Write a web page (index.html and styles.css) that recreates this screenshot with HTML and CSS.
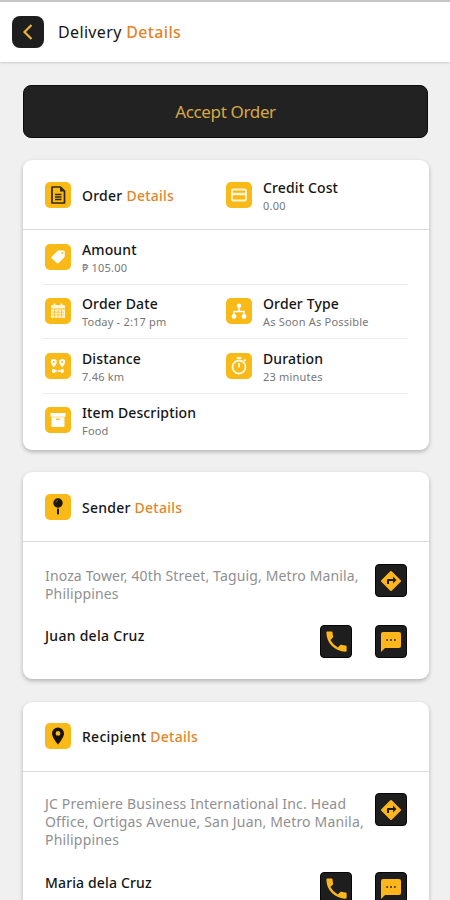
FILE: index.html
```html
<!DOCTYPE html>
<html lang="en">
<head>
<meta charset="utf-8">
<title>Delivery Details</title>
<link rel="stylesheet" href="styles.css">
</head>
<body>
<svg width="0" height="0" class="defs">
  <symbol id="turn" viewBox="0 0 24 24"><path d="M21.71 11.29l-9-9a1 1 0 0 0-1.42 0l-9 9a1 1 0 0 0 0 1.42l9 9a1 1 0 0 0 1.42 0l9-9a1 1 0 0 0 0-1.42zM14 14.5V12h-4v3H8v-4a1 1 0 0 1 1-1h5V7.5l3.5 3.5z"/></symbol>
  <symbol id="phone" viewBox="0 0 24 24"><path d="M20 15.5c-1.2 0-2.5-.2-3.6-.6-.3-.1-.7 0-1 .2l-2.2 2.2a15 15 0 0 1-6.6-6.6l2.2-2.2c.3-.3.4-.7.2-1C8.700 6.400 8.500 5.200 8.500 4c0-.6-.4-1-1-1H4c-.6 0-1 .4-1 1 0 9.400 7.600 17 17 17 .6 0 1-.4 1-1v-3.500c0-.6-.4-1-1-1z"/></symbol>
  <symbol id="chat" viewBox="0 0 24 24"><path d="M20 2H4a2 2 0 0 0-2 2v18l4-4h14a2 2 0 0 0 2-2V4a2 2 0 0 0-2-2zM9 10.800H7.300V9.200H9zm3.900 0h-1.800V9.200h1.800zm3.800 0H15V9.200h1.700z"/></symbol>
</svg>
<header class="topbar">
  <button class="back" aria-label="Back"><svg width="32" height="32" viewBox="0 0 32 32"><path d="M19.500 9L12.500 16l7 7" fill="none" stroke="#e9b43a" stroke-width="2.200"/></svg></button>
  <h1>Delivery <span class="hl">Details</span></h1>
</header>
<main>
  <button class="accept">Accept Order</button>

  <section class="card order">
    <div class="head split">
      <div class="item">
        <span class="icon"><svg viewBox="0 0 26 26"><path d="M7 5h8.500l4 4v12H7z" fill="none" stroke="#33280f" stroke-width="1.700" stroke-linejoin="round"/><path d="M15 5v4.500h4.500z" fill="#33280f"/><path d="M10 12.500h6.500M10 15h6.500M10 17.500h6.500" stroke="#33280f" stroke-width="1.300"/></svg></span>
        <h2>Order <span class="hl">Details</span></h2>
      </div>
      <div class="item">
        <span class="icon"><svg viewBox="0 0 26 26"><rect x="6" y="7.500" width="14" height="11" rx="1.200" fill="none" stroke="#fff6d5" stroke-width="1.800"/><path d="M6 12h14" stroke="#fff6d5" stroke-width="2.500"/></svg></span>
        <div><h3>Credit Cost</h3><p>0.00</p></div>
      </div>
    </div>
    <div class="rows">
      <div class="split row">
        <div class="item">
          <span class="icon"><svg viewBox="0 0 26 26"><path d="M13.700 6.500h4.800c.8 0 1.300.5 1.300 1.300v4.400c0 .4-.2.800-.5 1l-5.600 5.800c-.6.600-1.200.600-1.800 0L6.700 14.500c-.6-.6-.6-1.200 0-1.800l5.800-5.800c.3-.3.700-.4 1.200-.4z" fill="#fff"/><circle cx="17.400" cy="9" r=".9" fill="#f9b916"/></svg></span>
          <div><h3>Amount</h3><p>₱ 105.00</p></div>
        </div>
      </div>
      <div class="split row">
        <div class="item">
          <span class="icon"><svg viewBox="0 0 26 26"><path d="M6 10.500V8.500C6 7.500 6.500 7 7.500 7h1V5.500h2V7h5V5.500h2V7h1c1 0 1.500.5 1.500 1.500v2z" fill="#fff6d5"/><path d="M6 11.500h14v8.300H6z" fill="#fff6d5"/><path d="M9.500 12v7.500M13 12v7.500M16.500 12v7.500M7 14.200h12M7 17h12" stroke="#f9b916" stroke-width=".7"/></svg></span>
          <div><h3>Order Date</h3><p>Today - 2:17 pm</p></div>
        </div>
        <div class="item">
          <span class="icon"><svg viewBox="0 0 26 26"><g fill="#fff"><circle cx="13" cy="7.700" r="2.300"/><circle cx="8" cy="18.500" r="2.400"/><circle cx="18" cy="18.500" r="2.400"/></g><path d="M13 9v4.500M8 17v-3.500h10V17" fill="none" stroke="#fff" stroke-width="1.400"/></svg></span>
          <div><h3>Order Type</h3><p>As Soon As Possible</p></div>
        </div>
      </div>
      <div class="split row">
        <div class="item">
          <span class="icon"><svg viewBox="0 0 26 26"><path fill-rule="evenodd" fill="#fff" d="M8.800 6a3 3 0 0 1 3 3c0 2-3 5.500-3 5.500S5.800 11 5.800 9a3 3 0 0 1 3-3zm0 1.900a1 1 0 1 0 0 2 1 1 0 0 0 0-2zM17.200 6a3 3 0 0 1 3 3c0 2-3 5.500-3 5.500s-3-3.500-3-5.500a3 3 0 0 1 3-3zm0 1.900a1 1 0 1 0 0 2 1 1 0 0 0 0-2z"/><circle cx="8.800" cy="18" r="1.900" fill="#fff"/><circle cx="17.200" cy="18" r="1.900" fill="#fff"/><path d="M9 18h8" stroke="#fff" stroke-width="1.500" stroke-dasharray="2.800 .8"/></svg></span>
          <div><h3>Distance</h3><p>7.46 km</p></div>
        </div>
        <div class="item">
          <span class="icon"><svg viewBox="0 0 26 26"><circle cx="13" cy="14" r="6.500" fill="none" stroke="#fff8df" stroke-width="1.800"/><path d="M10.700 5h4.600M13 10v4.500M18 8l1.500-1.500" fill="none" stroke="#fff8df" stroke-width="1.800"/></svg></span>
          <div><h3>Duration</h3><p>23 minutes</p></div>
        </div>
      </div>
      <div class="split row">
        <div class="item">
          <span class="icon"><svg viewBox="0 0 26 26"><path d="M5.500 6h15v3.700h-15zM6.500 10.200h13V18.700c0 .8-.4 1.200-1.200 1.200H7.700c-.8 0-1.200-.4-1.200-1.200z" fill="#fff"/><path d="M11 12.200h4" stroke="#f9b916" stroke-width="1.300"/></svg></span>
          <div><h3>Item Description</h3><p>Food</p></div>
        </div>
      </div>
    </div>
  </section>

  <section class="card sender">
    <div class="head"><div class="item">
      <span class="icon"><svg viewBox="0 0 26 26"><circle cx="13" cy="9" r="4.700" fill="#1c160b"/><path d="M13 13v3" stroke="#6a500f" stroke-width="1.300"/><path d="M12 15h2v4.500l-1 1.500-1-1.500z" fill="#1c160b"/><path d="M11 8.500c0-1.300.7-2 2-2" fill="none" stroke="#777" stroke-width=".8"/></svg></span>
      <h2>Sender <span class="hl">Details</span></h2>
    </div></div>
    <div class="body">
      <div class="place"><p class="address">Inoza Tower, 40th Street, Taguig, Metro Manila,<br>Philippines</p><button class="action" aria-label="Directions"><svg><use href="#turn"/></svg></button></div>
      <div class="contact"><strong>Juan dela Cruz</strong><button class="action" aria-label="Call"><svg class="big"><use href="#phone"/></svg></button><button class="action" aria-label="Message"><svg><use href="#chat"/></svg></button></div>
    </div>
  </section>

  <section class="card recipient">
    <div class="head"><div class="item">
      <span class="icon"><svg viewBox="0 0 26 26"><path fill-rule="evenodd" d="M13 4.500a6 6 0 0 1 6 6c0 4.200-6 11-6 11s-6-6.800-6-11a6 6 0 0 1 6-6zm0 3.500a2.400 2.400 0 1 0 0 4.800A2.400 2.400 0 0 0 13 8z" fill="#17120a"/></svg></span>
      <h2>Recipient <span class="hl">Details</span></h2>
    </div></div>
    <div class="body">
      <div class="place"><p class="address">JC Premiere Business International Inc. Head<br>Office, Ortigas Avenue, San Juan, Metro Manila,<br>Philippines</p><button class="action" aria-label="Directions"><svg><use href="#turn"/></svg></button></div>
      <div class="contact"><strong>Maria dela Cruz</strong><button class="action" aria-label="Call"><svg class="big"><use href="#phone"/></svg></button><button class="action" aria-label="Message"><svg><use href="#chat"/></svg></button></div>
    </div>
  </section>
</main>
</body>
</html>
```
FILE: styles.css
```css
* { box-sizing: border-box; margin: 0; padding: 0; }
body {
  height: 900px;
  overflow: hidden;
  background: #f0f0f0;
  color: #151515;
  font-family: "Noto Sans", "Open Sans", sans-serif;
}
button { border: 0; font: inherit; }
svg { display: block; }
.defs { display: none; }
.hl { color: #e2852a; }

.topbar {
  display: flex;
  align-items: center;
  gap: 14px;
  height: 62px;
  padding: 0 12px;
  background: #fff;
  border-top: 2px solid #c5c5c5;
  box-shadow: 0 1px 2px rgba(0, 0, 0, .15);
}
.back {
  width: 32px;
  height: 32px;
  background: #1e1e1e;
  border-radius: 8px;
}
h1 { font-size: 16px; font-weight: 400; line-height: 22px; letter-spacing: .35px; }
h1 .hl { font-weight: 500; }
main { padding: 23px 21px 0 23px; }
.accept {
  display: block;
  width: 405px;
  height: 53px;
  background: #222;
  border: 1px solid #0c0c0c;
  border-radius: 8px;
  color: #d7a942;
  font-size: 17px;
  letter-spacing: -.35px;
}

.card {
  width: 406px;
  margin-top: 22px;
  background: #fff;
  border-radius: 9px;
  box-shadow: 0 2px 4px rgba(0, 0, 0, .25);
}
.order { height: 290px; }
.sender { height: 207px; }
.recipient { height: 240px; margin-top: 23px; }
.head {
  height: 70px;
  padding: 0 21.500px;
  border-bottom: 1px solid #dcdcdc;
  display: flex;
  align-items: center;
}
.recipient .head { padding-bottom: 1px; }
.split { display: grid; grid-template-columns: 181px 1fr; align-items: center; }
.item { display: flex; align-items: center; gap: 11.500px; }
.icon {
  flex: none;
  width: 26px;
  height: 26px;
  background: #f9b916;
  border-radius: 5px;
}
h2, h3 { font-size: 14px; font-weight: 500; line-height: 19px; white-space: nowrap; }
h2 { padding-top: 1px; letter-spacing: .25px; }
h3 { padding-top: 1px; letter-spacing: .13px; }
.item p { font-size: 11px; line-height: 17px; letter-spacing: .2px; color: #777; white-space: nowrap; }
.item div { padding-top: 1px; }
.rows { padding: 0 21px 0 20px; }
.row { height: 54.500px; padding-left: 1.500px; border-bottom: 1px solid #ececec; }
.row:last-child { height: 53px; border-bottom: 0; }

.body { padding: 22px 22px 0; }
.place, .contact { display: flex; align-items: flex-start; }
.address {
  flex: 1;
  padding-top: 3px;
  font-size: 14px;
  line-height: 18px;
  letter-spacing: .14px;
  color: #909090;
  white-space: nowrap;
}
.action {
  flex: none;
  display: grid;
  place-items: center;
  width: 32px;
  height: 33px;
  background: #1e1e1e;
  border: 1px solid #060606;
  border-radius: 4px;
  color: #fdb71c;
}
.action svg { width: 24px; height: 24px; fill: currentColor; }
.action .big { width: 27px; height: 27px; }
.contact { gap: 23px; margin-top: 22px; }
.contact strong { flex: 1; padding-top: 1px; font-size: 14px; font-weight: 500; line-height: 20px; letter-spacing: .28px; }
.recipient .body { padding-top: 21px; }
.recipient .contact { margin-top: 23px; }
.recipient .contact strong { letter-spacing: .14px; }
.recipient .address { padding-top: 2px; letter-spacing: .18px; }
```
